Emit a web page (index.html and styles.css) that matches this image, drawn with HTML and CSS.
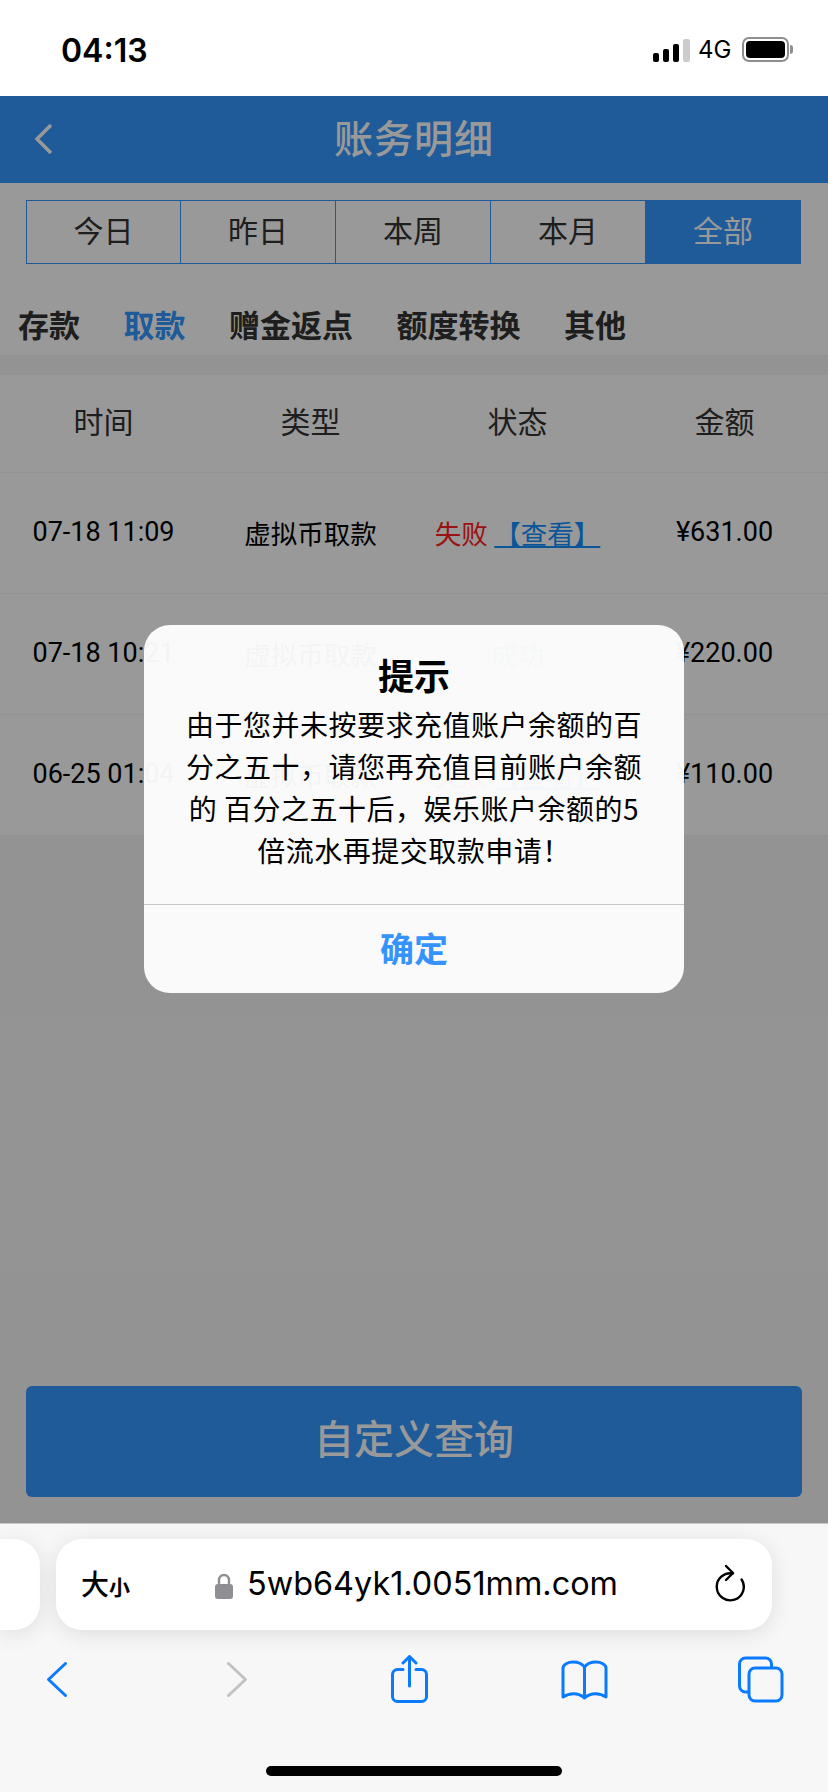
FILE: index.html
```html
<!DOCTYPE html>
<html lang="zh-CN">

<head>
  <meta charset="UTF-8">
  <meta name="viewport" content="width=device-width, initial-scale=1.0">
  <title>账务明细</title>
  <link rel="stylesheet" href="styles.css">
</head>

<body>
  <div class="status-bar">
    <span class="clock">04:13</span>
    <div class="status-right">
      <div class="signal">
        <i class="bar1"></i><i class="bar2"></i><i class="bar3"></i><i class="bar4"></i>
      </div>
      <span class="net">4G</span>
      <div class="battery"><i></i></div>
      <div class="battery-tip"></div>
    </div>
  </div>

  <div class="webview">
    <div class="header">
      <svg class="header-back" width="20" height="32" viewBox="0 0 20 32">
        <polyline points="17,2 3,16 17,30" fill="none" stroke="#fff" stroke-width="3.5" />
      </svg>
      <h1>账务明细</h1>
    </div>

    <div class="range-tabs">
      <div class="range-tab">今日</div>
      <div class="range-tab">昨日</div>
      <div class="range-tab">本周</div>
      <div class="range-tab">本月</div>
      <div class="range-tab active">全部</div>
    </div>

    <div class="type-tabs">
      <span>存款</span>
      <span class="active">取款</span>
      <span>赠金返点</span>
      <span>额度转换</span>
      <span>其他</span>
    </div>

    <div class="band"></div>

    <div class="table">
      <div class="table-row table-head">
        <div>时间</div>
        <div>类型</div>
        <div>状态</div>
        <div>金额</div>
      </div>
      <div class="table-row">
        <div class="num">07-18 11:09</div>
        <div>虚拟币取款</div>
        <div><span class="fail">失败</span> <a class="see">【查看】</a></div>
        <div class="num">¥631.00</div>
      </div>
      <div class="table-row">
        <div class="num">07-18 10:21</div>
        <div>虚拟币取款</div>
        <div><span class="ok">成功</span></div>
        <div class="num">¥220.00</div>
      </div>
      <div class="table-row">
        <div class="num">06-25 01:04</div>
        <div>虚拟币取款</div>
        <div><span class="fail">失败</span> <a class="see">【查看】</a></div>
        <div class="num">¥110.00</div>
      </div>
    </div>

    <div class="spacer"></div>
    <button class="query-btn">自定义查询</button>

    <div class="mask">
      <div class="dialog">
        <h2>提示</h2>
        <p>由于您并未按要求充值账户余额的百分之五十，请您再充值目前账户余额的 百分之五十后，娱乐账户余额的5倍流水再提交取款申请！</p>
        <div class="dialog-btn">确定</div>
      </div>
    </div>
  </div>

  <div class="browser">
    <div class="address-row">
      <div class="peek"></div>
      <div class="pill">
        <span class="text-size">大<small>小</small></span>
        <svg class="lock" width="18" height="26" viewBox="0 0 18 26">
          <path d="M4 12V7a5 5 0 0 1 10 0v5" fill="none" stroke="#8e8e93" stroke-width="2.4" />
          <rect x="0" y="11" width="18" height="15" rx="3" fill="#8e8e93" />
        </svg>
        <span class="url">5wb64yk1.0051mm.com</span>
        <svg class="reload" width="32" height="38" viewBox="0 0 32 38">
          <path d="M17 9A13.5 13.5 0 1 0 27 13" fill="none" stroke="#000" stroke-width="2.4" stroke-linecap="round" transform="rotate(12 16 22)" />
          <polyline points="13,2 20,9 13,16" fill="none" stroke="#000" stroke-width="2.4" stroke-linecap="round" stroke-linejoin="round" />
        </svg>
      </div>
    </div>

    <div class="toolbar">
      <svg class="tool-back" width="24" height="48" viewBox="0 0 24 48">
        <polyline points="20.5,8.5 3.5,24.5 20.5,40.5" class="stroke" />
      </svg>
      <svg class="tool-forward" width="24" height="48" viewBox="0 0 24 48">
        <polyline points="3.5,8.5 20.5,24.5 3.5,40.5" class="stroke off" />
      </svg>
      <svg class="tool-share" width="37" height="48" viewBox="0 0 37 48">
        <path d="M12 14.5H6.5a5 5 0 0 0-5 5v22a5 5 0 0 0 5 5h24a5 5 0 0 0 5-5v-22a5 5 0 0 0-5-5H25" class="stroke" />
        <path d="M18.5 31V2M12 8l6.5-6.5L25 8" class="stroke" />
      </svg>
      <svg class="tool-book" width="47" height="48" viewBox="0 0 47 48">
        <path d="M23.5 12C21 8.500 16 7 12 7 7 7 2 9.500 2 13V42C8 38 17 37 23.500 43 30 37 39 38 45 42V13C45 9.500 40 7 35 7 31 7 26 8.500 23.500 12V43" class="stroke" />
      </svg>
      <svg class="tool-tabs" width="46" height="48" viewBox="0 0 46 48">
        <rect x="1.500" y="3" width="32" height="34" rx="6" class="stroke" />
        <rect x="11" y="13" width="33" height="33" rx="6" class="stroke filled" />
      </svg>
    </div>

    <div class="home-bar"></div>
  </div>
</body>

</html>
```

FILE: styles.css
```css
* {
  box-sizing: border-box;
}

body {
  margin: 0;
  width: 828px;
  height: 1792px;
  overflow: hidden;
  display: flex;
  flex-direction: column;
  background: #fff;
  color: #000;
  font-family: "Noto Sans CJK SC", sans-serif;
}

/* status bar */
.status-bar {
  height: 96px;
  flex: none;
  display: flex;
  justify-content: space-between;
  align-items: flex-start;
  padding: 31px 35px 0 61px;
}

.clock {
  font-family: Inter, sans-serif;
  font-weight: 600;
  font-size: 32px;
  line-height: 40px;
}

.status-right {
  display: flex;
  align-items: flex-end;
  margin-top: 6px;
}

.signal {
  display: flex;
  align-items: flex-end;
  gap: 4px;
  height: 24px;
}

.signal i {
  display: block;
  width: 6px;
  border-radius: 2px;
  background: #000;
}

.signal .bar1 {
  height: 9px;
}

.signal .bar2 {
  height: 13px;
}

.signal .bar3 {
  height: 18px;
}

.signal .bar4 {
  height: 23px;
  width: 7px;
  background: #ccc;
}

.net {
  font-family: Inter, sans-serif;
  font-size: 24px;
  line-height: 24px;
  margin-left: 8px;
  width: 44px;
}

.battery {
  width: 47px;
  height: 25px;
  border: 2px solid #8e8e8e;
  border-radius: 7px;
  padding: 2px;
}

.battery i {
  display: block;
  height: 100%;
  background: #000;
  border-radius: 4px;
}

.battery-tip {
  width: 3px;
  height: 9px;
  margin: 0 0 8px 1px;
  background: #8e8e8e;
  border-radius: 0 3px 3px 0;
}

/* page behind the dialog */
.webview {
  position: relative;
  flex: 1;
  display: flex;
  flex-direction: column;
  background: #f6f6f6;
}

.header {
  height: 87px;
  flex: none;
  display: flex;
  align-items: center;
  justify-content: center;
  position: relative;
  padding-bottom: 8px;
  background: #3496ff;
}

.header-back {
  position: absolute;
  left: 34px;
  top: 27px;
}

.header h1 {
  margin: 0;
  color: #fff;
  font-size: 39px;
  font-weight: 500;
  letter-spacing: 1px;
}

.range-tabs {
  flex: none;
  display: grid;
  grid-template-columns: repeat(5, 155px);
  height: 81px;
  padding: 17px 0 0 26px;
  background: #fff;
}

.range-tab {
  border: 1px solid #3496ff;
  border-left-width: 0;
  display: flex;
  align-items: center;
  justify-content: center;
  padding-bottom: 6px;
  color: #333;
  font-size: 30px;
}

.range-tab:first-child {
  border-left-width: 1px;
}

.range-tab.active {
  background: #3496ff;
  color: #fff;
}

.type-tabs {
  flex: none;
  height: 91px;
  display: flex;
  gap: 43.5px;
  align-items: center;
  padding: 28px 0 0 18px;
  background: #fff;
  color: #333;
  font-size: 31px;
  font-weight: 700;
}

.type-tabs .active {
  color: #3496ff;
}

.band {
  flex: none;
  height: 20px;
  background: #f5f5f5;
}

.table-row {
  display: grid;
  grid-template-columns: repeat(4, 207px);
  height: 121px;
  padding-bottom: 2px;
  align-items: center;
  text-align: center;
  background: #fff;
  border-bottom: 1px solid #f3f3f3;
  font-size: 26.500px;
}

.table-row>div {
  font-family: Roboto, "Noto Sans CJK SC", sans-serif;
  white-space: nowrap;
}

.table-row>.num {
  font-size: 27px;
}

.table-head {
  height: 98px;
  padding-bottom: 8px;
  font-size: 30px;
  color: #333;
}

.fail {
  color: #ff2020;
}

.ok {
  color: #2fbf2f;
}

.see {
  color: #1190ff;
  text-decoration: underline;
}

.spacer {
  flex: 1;
}

.query-btn {
  flex: none;
  height: 111px;
  margin: 0 26px 26px;
  padding: 0 0 10px;
  border: none;
  border-radius: 6px;
  background: #3496ff;
  color: #fff;
  font-family: inherit;
  font-size: 40px;
  font-weight: 500;
}

.mask {
  position: absolute;
  top: 0;
  left: 0;
  width: 100%;
  height: 100%;
  display: flex;
  align-items: center;
  justify-content: center;
  background: rgba(0, 0, 0, 0.4);
}

.dialog {
  width: 540px;
  height: 368px;
  margin-bottom: 1px;
  border-radius: 26px;
  background: rgba(254, 254, 254, 0.96);
  text-align: center;
  padding-top: 24px;
}

.dialog h2 {
  margin: 0;
  font-size: 36px;
  line-height: 50px;
  font-weight: 700;
}

.dialog p {
  margin: 4px auto 0;
  width: 462px;
  height: 201px;
  font-size: 28px;
  letter-spacing: 0.5px;
  line-height: 42px;
}

.dialog-btn {
  height: 89px;
  border-top: 1px solid #c8c8c8;
  display: flex;
  align-items: center;
  justify-content: center;
  padding-bottom: 4px;
  color: #3593fb;
  font-size: 34px;
  font-weight: 700;
}

/* safari bottom bar */
.browser {
  flex: none;
  height: 269px;
  background: #f7f7f7;
  border-top: 1px solid #c6c6c6;
}

.address-row {
  display: flex;
  gap: 16px;
  padding-top: 15px;
}

.peek,
.pill {
  height: 91px;
  background: #fff;
  box-shadow: 0 4px 22px rgba(0, 0, 0, 0.1);
}

.peek {
  width: 40px;
  border-radius: 0 26px 26px 0;
}

.pill {
  width: 716px;
  border-radius: 26px;
  display: flex;
  align-items: center;
  padding-left: 25px;
}

.text-size {
  font-size: 28px;
  font-weight: 500;
  line-height: 36px;
  width: 134px;
}

.text-size small {
  font-size: 21px;
  font-weight: 700;
}

.lock {
  flex: none;
  margin-top: 2px;
}

.url {
  font-family: Inter, sans-serif;
  font-size: 32.400px;
  margin-left: 14px;
  margin-top: -2px;
  width: 466px;
  white-space: nowrap;
}

.reload {
  flex: none;
  margin-top: -3px;
}

.toolbar {
  display: flex;
  padding: 25px 0 0 45px;
}

.stroke {
  fill: none;
  stroke: #0a7aff;
  stroke-width: 3;
  stroke-linecap: round;
  stroke-linejoin: round;
}

.stroke.off {
  stroke: #c2c2c2;
}

.stroke.filled {
  fill: #f7f7f7;
}

.tool-forward {
  margin-left: 156px;
}

.tool-share {
  margin-left: 142px;
}

.tool-book {
  margin-left: 133px;
}

.tool-tabs {
  margin-left: 130px;
}

.home-bar {
  width: 296px;
  height: 10px;
  margin: 63px 0 0 266px;
  background: #000;
  border-radius: 5px;
}
```
